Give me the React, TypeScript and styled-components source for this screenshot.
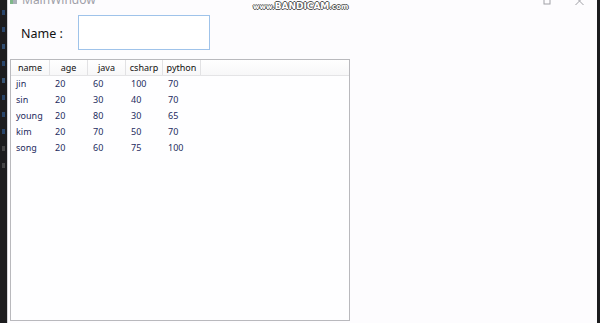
import React from "react";
import styled, { createGlobalStyle } from "styled-components";

const Global = createGlobalStyle`
  html, body { margin: 0; padding: 0; background: #fdfcfe; }
  #root { width: 600px; height: 323px; }
`;

const Root = styled.div`
  display: flex;
  width: 600px;
  height: 323px;
  overflow: hidden;
  position: relative;
  font-family: "Noto Sans", "Open Sans", sans-serif;
`;

const Desktop = styled.div<{ $w: number }>`
  width: ${(p) => p.$w}px;
  flex: none;
  background: #1c1c1e;
  display: flex;
  flex-direction: column;
  gap: 12px;
  padding-top: 10px;
  overflow: hidden;
`;

const CodeBit = styled.span<{ $c: string }>`
  display: block;
  width: 3px;
  height: 5px;
  margin-left: 2px;
  background: ${(p) => p.$c};
  opacity: 0.45;
`;

const Window = styled.div`
  flex: 1;
  background: #fdfcfe;
  border-left: 1px solid #d4d4d8;
  display: flex;
  flex-direction: column;
  min-width: 0;
`;

const TitleBar = styled.div`
  height: 8px;
  flex: none;
  display: flex;
  align-items: flex-start;
  overflow: hidden;
  padding-left: 2px;
  padding-right: 1px;
`;

const AppIcon = styled.span`
  width: 7px;
  height: 4px;
  background: linear-gradient(90deg, #7fb88a 0 40%, #a9b0b8 40% 100%);
  flex: none;
`;

const Title = styled.span`
  font-size: 12px;
  line-height: 12px;
  margin-top: -6px;
  margin-left: 5px;
  color: #a0a0a8;
`;

const Spacer = styled.div`
  flex: 1;
`;

const CaptionBtn = styled.span`
  width: 33px;
  display: flex;
  justify-content: center;
  color: #9a9aa0;
`;

const NameRow = styled.div`
  display: flex;
  align-items: center;
  margin-top: 7px;
  height: 35px;
`;

const Label = styled.span`
  width: 70px;
  padding-left: 13px;
  box-sizing: border-box;
  font-size: 12.5px;
  color: #111;
  flex: none;
  margin-top: 2px;
`;

const TextBox = styled.div`
  width: 132px;
  height: 35px;
  box-sizing: border-box;
  border: 1px solid #9fc3ea;
  background: #fff;
`;

const ListView = styled.div`
  margin-top: 9px;
  margin-left: 2px;
  width: 340px;
  height: 262px;
  box-sizing: border-box;
  border: 1px solid #b9b9bd;
  background: #fefeff;
  display: flex;
  flex-direction: column;
`;

const Header = styled.div`
  display: flex;
  height: 16px;
  box-sizing: border-box;
  border-bottom: 1px solid #e4e4e6;
  background: linear-gradient(#ffffff, #f7f7f8);
`;

const HeaderCell = styled.div<{ $w: number }>`
  width: ${(p) => p.$w}px;
  flex: none;
  box-sizing: border-box;
  border-right: 1px solid #e2e2e4;
  font-size: 9px;
  line-height: 15px;
  text-align: center;
  color: #111;
`;

const HeaderFill = styled.div`
  flex: 1;
`;

const Row = styled.div`
  display: flex;
  height: 16px;
`;

const Cell = styled.div<{ $w: number }>`
  width: ${(p) => p.$w}px;
  flex: none;
  box-sizing: border-box;
  padding-left: 5px;
  font-size: 9px;
  line-height: 16px;
  color: #1d2b5e;
`;

const Watermark = styled.div`
  position: absolute;
  left: 253px;
  top: 0px;
  font-family: "DejaVu Sans", sans-serif;
  font-weight: bold;
  font-size: 9px;
  line-height: 12px;
  color: #fff;
  text-shadow: -1px 0 #555, 1px 0 #555, 0 -1px #555, 0 1px #555;
`;

const Small = styled.span`
  font-size: 7px;
`;

const cols = [
  { key: "name", w: 39 },
  { key: "age", w: 38 },
  { key: "java", w: 38 },
  { key: "csharp", w: 37 },
  { key: "python", w: 38 },
];

const data = [
  ["jin", "20", "60", "100", "70"],
  ["sin", "20", "30", "40", "70"],
  ["young", "20", "80", "30", "65"],
  ["kim", "20", "70", "50", "70"],
  ["song", "20", "60", "75", "100"],
];

export default function App() {
  return (
    <Root>
      <Global />
      <Desktop $w={7}>
        <CodeBit $c="#3a78c8" />
        <CodeBit $c="#3a78c8" />
        <CodeBit $c="#4a8ad8" />
        <CodeBit $c="#3a78c8" />
        <CodeBit $c="#5b9be0" />
        <CodeBit $c="#3a78c8" />
        <CodeBit $c="#3a78c8" />
        <CodeBit $c="#3a78c8" />
        <CodeBit $c="#777" />
        <CodeBit $c="#777" />
      </Desktop>
      <Window>
        <TitleBar>
          <AppIcon />
          <Title>MainWindow</Title>
          <Spacer />
          <CaptionBtn>
            <svg width="8" height="5" viewBox="0 0 8 5">
              <rect x="1" y="-3" width="6" height="7" fill="none" stroke="#a0a0a6" strokeWidth="1" />
            </svg>
          </CaptionBtn>
          <CaptionBtn>
            <svg width="9" height="6" viewBox="0 0 9 6">
              <path d="M0.5 -3 L8.5 5 M8.5 -3 L0.5 5" stroke="#a0a0a6" strokeWidth="1" />
            </svg>
          </CaptionBtn>
        </TitleBar>
        <NameRow>
          <Label>Name :</Label>
          <TextBox />
        </NameRow>
        <ListView>
          <Header>
            {cols.map((c) => (
              <HeaderCell key={c.key} $w={c.w}>
                {c.key}
              </HeaderCell>
            ))}
            <HeaderFill />
          </Header>
          {data.map((r) => (
            <Row key={r[0]}>
              {r.map((v, i) => (
                <Cell key={i} $w={cols[i].w}>
                  {v}
                </Cell>
              ))}
            </Row>
          ))}
        </ListView>
      </Window>
      <Desktop $w={3} />
      <Watermark>
        <Small>www.</Small>BANDICAM<Small>.com</Small>
      </Watermark>
    </Root>
  );
}
